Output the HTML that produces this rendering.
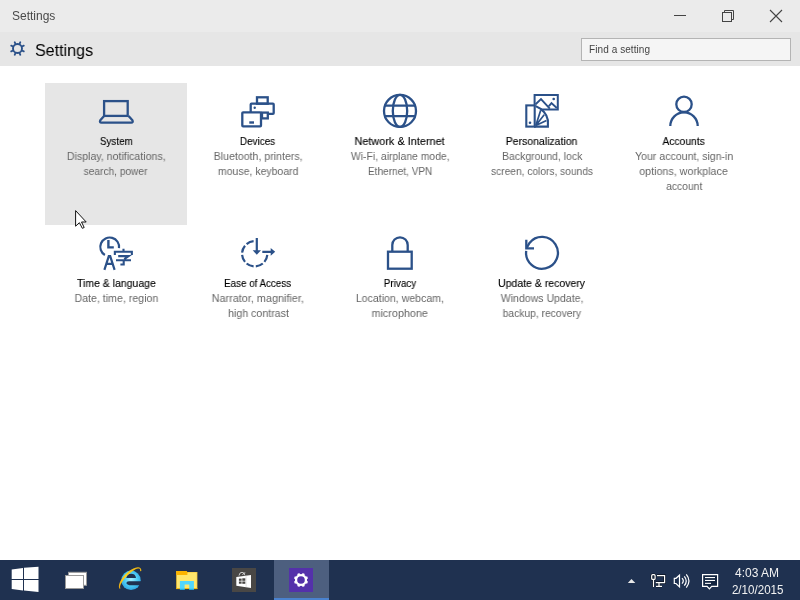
<!DOCTYPE html>
<html><head><meta charset="utf-8">
<style>
html,body{margin:0;padding:0;width:800px;height:600px;overflow:hidden;background:#fff;font-family:"Liberation Sans",sans-serif;}
.abs{position:absolute;}
#titlebar{left:0;top:0;width:800px;height:32px;background:#ebebeb;}
#ttl{left:12px;top:9px;font-size:12px;color:#4a4a4a;}
#hdr{left:0;top:32px;width:800px;height:34px;background:#e6e6e6;}
#htxt{left:35px;top:41px;font-size:17px;color:#000;transform:scaleX(0.945);transform-origin:0 0;}
#search{left:581px;top:38px;width:208px;height:21px;border:1px solid #b4b4b4;background:#f5f5f5;}
#stxt{left:589px;top:44px;font-size:10px;letter-spacing:0.08px;color:#444;}
.sel{left:45px;top:83px;width:142px;height:142px;background:#e6e6e6;}
.ln{position:absolute;width:142px;text-align:center;font-size:11px;line-height:15px;white-space:nowrap;}
.ln span{display:inline-block;transform-origin:50% 50%;will-change:transform;}
#ttl,#htxt,#stxt,.clk{will-change:transform;}
.t{color:#000;-webkit-text-stroke:0.12px #000;}
.d{color:#666;}
#taskbar{left:0;top:560px;width:800px;height:40px;background:#1f3150;}
</style></head><body>
<div id="titlebar" class="abs"></div>
<div id="ttl" class="abs">Settings</div>
<svg class="abs" style="left:660px;top:0" width="140" height="32">
 <line x1="14" y1="15.5" x2="26" y2="15.5" stroke="#444" stroke-width="1"/>
 <rect x="62.5" y="12.5" width="9" height="9" fill="none" stroke="#444" stroke-width="1"/>
 <path d="M64.5 12.5V10.5H73.5V19.5H71.5" fill="none" stroke="#444" stroke-width="1"/>
 <path d="M110 10L122 22M122 10L110 22" stroke="#444" stroke-width="1.1"/>
</svg>
<div id="hdr" class="abs"></div>
<svg class="abs" style="left:0;top:32px" width="40" height="34" viewBox="0 32 40 34">
 <circle cx="17.5" cy="48.5" r="4.5" fill="none" stroke="#2b5189" stroke-width="1.9"/>
 <path d="M21.89,50.45L23.80,51.31M19.45,52.89L20.31,54.80M15.55,52.89L14.69,54.80M13.11,50.45L11.20,51.31M13.11,46.55L11.20,45.69M15.55,44.11L14.69,42.20M19.45,44.11L20.31,42.20M21.89,46.55L23.80,45.69" stroke="#2b5189" stroke-width="1.8" stroke-linecap="round"/>
</svg>
<div id="htxt" class="abs">Settings</div>
<div id="search" class="abs"></div>
<div id="stxt" class="abs">Find a setting</div>

<div class="sel abs"></div>
<!--TILES-->
<div class="ln t" style="left:45px;top:134px"><span style="transform:scaleX(0.8972)">System</span></div>
<div class="ln d" style="left:45px;top:149px"><span style="transform:scaleX(0.9637)">Display, notifications,</span></div>
<div class="ln d" style="left:45px;top:164px"><span style="transform:scaleX(0.9232)">search, power</span></div>
<div class="ln t" style="left:187px;top:134px"><span style="transform:scaleX(0.9026)">Devices</span></div>
<div class="ln d" style="left:187px;top:149px"><span style="transform:scaleX(0.9630)">Bluetooth, printers,</span></div>
<div class="ln d" style="left:187px;top:164px"><span style="transform:scaleX(0.9548)">mouse, keyboard</span></div>
<div class="ln t" style="left:329px;top:134px"><span style="transform:scaleX(0.9890)">Network &amp; Internet</span></div>
<div class="ln d" style="left:329px;top:149px"><span style="transform:scaleX(0.9448)">Wi-Fi, airplane mode,</span></div>
<div class="ln d" style="left:329px;top:164px"><span style="transform:scaleX(0.9157)">Ethernet, VPN</span></div>
<div class="ln t" style="left:471px;top:134px"><span style="transform:scaleX(0.9527)">Personalization</span></div>
<div class="ln d" style="left:471px;top:149px"><span style="transform:scaleX(0.9512)">Background, lock</span></div>
<div class="ln d" style="left:471px;top:164px"><span style="transform:scaleX(0.9273)">screen, colors, sounds</span></div>
<div class="ln t" style="left:613px;top:134px"><span style="transform:scaleX(0.9348)">Accounts</span></div>
<div class="ln d" style="left:613px;top:149px"><span style="transform:scaleX(0.9598)">Your account, sign-in</span></div>
<div class="ln d" style="left:613px;top:164px"><span style="transform:scaleX(0.9725)">options, workplace</span></div>
<div class="ln d" style="left:613px;top:179px"><span style="transform:scaleX(0.9385)">account</span></div>
<div class="ln t" style="left:45px;top:276px"><span style="transform:scaleX(0.9518)">Time &amp; language</span></div>
<div class="ln d" style="left:45px;top:291px"><span style="transform:scaleX(0.9640)">Date, time, region</span></div>
<div class="ln t" style="left:187px;top:276px"><span style="transform:scaleX(0.8907)">Ease of Access</span></div>
<div class="ln d" style="left:187px;top:291px"><span style="transform:scaleX(0.9859)">Narrator, magnifier,</span></div>
<div class="ln d" style="left:187px;top:306px"><span style="transform:scaleX(0.9651)">high contrast</span></div>
<div class="ln t" style="left:329px;top:276px"><span style="transform:scaleX(0.9000)">Privacy</span></div>
<div class="ln d" style="left:329px;top:291px"><span style="transform:scaleX(0.9589)">Location, webcam,</span></div>
<div class="ln d" style="left:329px;top:306px"><span style="transform:scaleX(0.9807)">microphone</span></div>
<div class="ln t" style="left:471px;top:276px"><span style="transform:scaleX(0.9549)">Update &amp; recovery</span></div>
<div class="ln d" style="left:471px;top:291px"><span style="transform:scaleX(0.9593)">Windows Update,</span></div>
<div class="ln d" style="left:471px;top:306px"><span style="transform:scaleX(0.9357)">backup, recovery</span></div>
<!--/TILES-->
<svg class="abs" style="left:0;top:0" width="800" height="560" viewBox="0 0 800 560">
<g fill="none" stroke="#2b5189" stroke-width="2.3">
 <!-- system laptop -->
 <rect x="104.1" y="101.1" width="23.6" height="14.8"/>
 <path d="M104.1,116 L100.3,120.2 Q99.2,122.7 101.5,122.7 L131.2,122.7 Q133.5,122.7 132.4,120.2 L128.6,116" stroke-linejoin="round"/>
 <!-- devices -->
 <rect x="257" y="97.3" width="10.7" height="6.4"/>
 <rect x="250.7" y="103.7" width="23" height="10.2" rx="0.8"/>
 <rect x="262" y="112.6" width="5.8" height="5.8" fill="#fff"/>
 <rect x="242.3" y="112.3" width="18.7" height="14" rx="0.8" fill="#fff"/>
 <!-- globe -->
 <circle cx="400" cy="110.9" r="16"/>
 <ellipse cx="400" cy="110.9" rx="7.2" ry="16"/>
 <path d="M384.5,105.7H415.5M384.5,116.2H415.5"/>
 <!-- personalization -->
 <path d="M540.6,109.6 H557.8 V95.1 H534.6 V106" stroke-width="2"/>
 <path d="M535.6,104.2 L541,99 L549.8,108.6 M548.9,106.2 L551.5,103.1 L556.8,108" stroke-width="1.9"/>
 <rect x="526.3" y="105.4" width="8.4" height="21.2" stroke-width="2.1"/>
 <path d="M535.7,106.2 L540.7,108.9 L544,112 Q546.8,115 547.9,120.3 V126.6 H534" stroke-width="2.1"/>
 <path d="M535.8,125.5 L540.7,110.2 M535.8,125.5 L544.2,114.8 M535.8,125.5 L546.5,120.5" stroke-width="1.7"/>
 <!-- accounts -->
 <circle cx="684" cy="104.3" r="7.7"/>
 <path d="M670.3,126 A13.7,13.7 0 0 1 697.7,126"/>
 <!-- time & language -->
 <path d="M104.9,255 A9.4,9.4 0 1 1 119,248.2" stroke-width="2.2"/>
 <path d="M108.4,240 V247.4 H113.8" stroke-width="2.4"/>
 <path d="M104.4,269.8 L108.8,256.2 H110.2 L114.6,269.8 M106,263.9 H113" stroke-width="2.2"/>
 <path d="M123.5,248.8 V251 M114.85,255.1 V251.8 H131.85 V255.1 M118.2,256.1 H128.6 L124.3,259.1 M116,260.3 H131 M123.7,259.5 V264.5 H120.4" stroke-width="2.1"/>
 <!-- ease of access -->
 <path d="M267.3,254.9A12.6,12.6 0 0 1 264.4,261.9M262.8,263.5A12.6,12.6 0 0 1 255.8,266.4M253.6,266.4A12.6,12.6 0 0 1 246.6,263.5M245.0,261.9A12.6,12.6 0 0 1 242.1,254.9M242.1,252.7A12.6,12.6 0 0 1 245.0,245.7M246.6,244.1A12.6,12.6 0 0 1 253.6,241.2" stroke-width="2.2"/>
 <path d="M256.8,238 V251 M262.3,251.8 H271.5" stroke-width="2.2"/>
 <!-- privacy -->
 <rect x="388" y="251.7" width="23.7" height="17"/>
 <path d="M392.3,251.7 V245 A7.7,7.7 0 0 1 407.7,245 V251.7"/>
 <!-- update -->
 <path d="M526.2,250.9 A15.9,15.9 0 1 0 529.5,243 L526.8,247.6" stroke-width="2.3"/>
 <path d="M526.3,239.8 V248.4 H534" stroke-width="2.3"/>
</g>
<g fill="#2b5189">
 <circle cx="254.7" cy="107.7" r="1.2"/>
 <rect x="249.3" y="121.3" width="4.7" height="2.4"/>
 <circle cx="553.7" cy="99" r="1.3"/>
 <circle cx="530" cy="122.7" r="1.3"/>
 <path d="M252.7,250.3 H261 L256.8,254.8Z M270.7,247.9 L275.2,251.8 L270.7,255.7Z"/>
</g>
</svg>
<svg class="abs" style="left:0;top:0" width="800" height="600" viewBox="0 0 800 600">
 <path d="M75.6,210.6 L75.6,226.2 L79.4,222.7 L82.3,228.3 L84.2,227.5 L81.5,222 L86.2,222 Z" fill="#fff" stroke="#111" stroke-width="1" stroke-linejoin="miter"/>
</svg>
<div id="taskbar" class="abs"></div>
<svg class="abs" style="left:0;top:560px" width="800" height="40" viewBox="0 560 800 40">
 <defs>
  <radialGradient id="ieg" cx="0.5" cy="0.45" r="0.6">
   <stop offset="0" stop-color="#a8f0ff"/><stop offset="0.55" stop-color="#4ccbf5"/><stop offset="1" stop-color="#2a9ee0"/>
  </radialGradient>
  <linearGradient id="ring" x1="0" y1="1" x2="1" y2="0">
   <stop offset="0" stop-color="#e8a810"/><stop offset="0.45" stop-color="#ffd21e"/><stop offset="1" stop-color="#e9b010"/>
  </linearGradient>
 </defs>
 <!-- start -->
 <g fill="#fff">
  <path d="M11.7,569.4 L23,567.9 V579 H11.7Z"/>
  <path d="M24,567.8 L38.5,566.7 V579 H24Z"/>
  <path d="M11.7,580 H23 V590.5 L11.7,589Z"/>
  <path d="M24,580 H38.5 V592 L24,590.6Z"/>
 </g>
 <!-- task view -->
 <rect x="68.5" y="572.3" width="18" height="13" fill="#fff" stroke="#9a9a9a" stroke-width="1"/>
 <rect x="65.5" y="575.5" width="18" height="13" fill="#fff" stroke="#9a9a9a" stroke-width="1"/>
 <!-- IE -->
  <circle cx="131" cy="580.3" r="9.7" fill="url(#ieg)"/>
 <path d="M126.3,578 Q126.8,573.8 131.2,573.7 Q135.6,573.8 136,578 Z" fill="#1f3150"/>
 <path d="M142,581.3 H129 Q126.3,581.3 126.6,583.2 Q127.4,585.2 131,585.2 H142 Z" fill="#1f3150"/>
 <path d="M119.9,589.0 L119.6,588.7 L119.4,588.3 L119.2,587.9 L119.0,587.5 L118.9,587.0 L118.9,586.4 L118.9,585.9 L119.0,585.2 L119.1,584.6 L119.3,583.9 L119.5,583.2 L119.8,582.5 L120.1,581.8 L120.5,581.0 L120.9,580.3 L121.4,579.5 L121.9,578.7 L122.4,577.9 L123.0,577.1 L123.7,576.4 L124.3,575.6 L125.0,574.8 L125.7,574.1 L126.4,573.4 L127.2,572.7 L128.0,572.1 L128.7,571.4 L129.5,570.8 L130.3,570.3 L131.1,569.8 L131.9,569.3 L132.6,568.9 L133.4,568.5 L134.1,568.2 L134.8,567.9 L135.5,567.7 L136.2,567.5 L136.8,567.4 L137.5,567.3 L138.0,567.3 L138.6,567.3 L139.1,567.4 L139.5,567.6 L139.9,567.8 L140.3,568.0 L140.6,568.3 L140.8,568.7 L141.0,569.1 L141.2,569.5 L141.3,570.0 L141.3,570.6 L141.3,571.1 L139.9,571.3 L140.0,570.9 L140.1,570.4 L140.1,570.0 L140.1,569.7 L140.0,569.4 L139.9,569.1 L139.7,568.9 L139.5,568.7 L139.2,568.6 L138.9,568.5 L138.6,568.5 L138.2,568.5 L137.7,568.6 L137.3,568.7 L136.8,568.8 L136.2,569.1 L135.6,569.3 L135.1,569.6 L134.4,570.0 L133.8,570.4 L133.1,570.8 L132.5,571.2 L131.8,571.7 L131.1,572.3 L130.4,572.8 L129.7,573.4 L129.0,574.0 L128.3,574.7 L127.6,575.3 L126.9,576.0 L126.3,576.7 L125.6,577.4 L125.0,578.1 L124.4,578.8 L123.9,579.5 L123.3,580.2 L122.8,580.9 L122.4,581.5 L122.0,582.2 L121.6,582.8 L121.2,583.5 L120.9,584.0 L120.7,584.6 L120.4,585.2 L120.3,585.7 L120.2,586.1 L120.1,586.6 L120.1,587.0 L120.1,587.3 L120.2,587.6 L120.3,587.9 L120.5,588.1Z" fill="url(#ring)"/>
 <!-- folder -->
 <path d="M176.2,570.9 H186.4 L187.4,571.9 H197.4 V589.1 H176.2Z" fill="#f3c237"/>
 <rect x="176.9" y="572.5" width="19.8" height="15.9" fill="#ffe76c"/>
 <path d="M176.2,570.9 H186.4 L187.4,572.2 V574.9 H176.2Z" fill="#fbb400"/>
 <rect x="176.2" y="588.2" width="21.2" height="0.9" fill="#f5b500"/>
 <path d="M179.9,580.9 H193.9 V589.8 H189.3 V584.4 H184.6 V589.8 H179.9Z" fill="#52d6fc"/>
 <rect x="179.9" y="588.8" width="4.7" height="1" fill="#1aa8e0"/><rect x="189.3" y="588.8" width="4.6" height="1" fill="#1aa8e0"/>
 <!-- store -->
 <rect x="232" y="568" width="24" height="24" fill="#494745"/>
 <path d="M239,575.6 Q239.5,572.2 242,572.3 Q244.4,572.3 244.7,575.2 M242.5,575 Q243.5,572.6 245.3,572.8" fill="none" stroke="#d8d8d8" stroke-width="0.9"/>
 <path d="M236.3,577 L251,574.9 V587.9 L236.3,585.8Z" fill="#fff"/>
 <path d="M246.1,575.6 V587.2" stroke="#cfcfcf" stroke-width="0.6"/>
 <g fill="#474542"><rect x="238.9" y="578.6" width="2.7" height="2.2"/><rect x="242.3" y="578.3" width="3" height="2.5"/><rect x="238.9" y="581.5" width="2.7" height="2.2"/><rect x="242.3" y="581.5" width="3" height="2.3"/></g>
 <!-- active settings -->
 <rect x="274" y="560" width="55" height="40" fill="#4d5f7f"/>
 <rect x="274" y="598" width="55" height="2" fill="#4a82cf"/>
 <rect x="289" y="568" width="24" height="24" fill="#5431aa"/>
 <circle cx="301" cy="580" r="4.95" fill="none" stroke="#fff" stroke-width="2.3"/>
 <path d="M305.62,581.91L307.56,582.72M302.91,584.62L303.72,586.56M299.09,584.62L298.28,586.56M296.38,581.91L294.44,582.72M296.38,578.09L294.44,577.28M299.09,575.38L298.28,573.44M302.91,575.38L303.72,573.44M305.62,578.09L307.56,577.28" stroke="#fff" stroke-width="2.4"/>
 <!-- tray -->
 <path d="M627.8,583 L631.5,579 L635.3,583Z" fill="#e8e8e8"/>
 <g fill="none" stroke="#000" stroke-width="2.6" opacity="0.55">
  <rect x="651.7" y="574.7" width="3.4" height="4.7" rx="1"/>
  <path d="M653.5,580 V587 M657,575.6 H664.6 V582.6 H655.8 M659,583 V586.3 M656,586.3 H662"/>
 </g>
 <g fill="none" stroke="#fff" stroke-width="1.2">
  <rect x="651.7" y="574.7" width="3.4" height="4.7" rx="1"/>
  <path d="M653.5,580 V587 M657,575.6 H664.6 V582.6 H655.8 M659,583 V586.3 M656,586.3 H662"/>
  <path d="M674.3,578.3 H676 L679.5,575.2 V586.9 L676,583.5 H674.3Z"/>
  <path d="M682,578.2 Q684.6,580.9 682,583.6 M684.3,576.3 Q688.2,580.9 684.3,585.6 M686.3,574.4 Q691.6,580.9 686.3,587.6"/>
  <path d="M702.6,574.6 H717.6 V586.3 H711.7 L709.4,588.8 L707.1,586.3 H702.6Z" fill="#132540"/>
 </g>
 <g fill="#fff"><rect x="705" y="577" width="10" height="1.1"/><rect x="705" y="579.9" width="10" height="1.1"/><rect x="705" y="582.8" width="6" height="1.1"/></g>
</svg>
<div class="abs clk" style="left:721px;top:565px;width:72px;text-align:center;font-size:12px;line-height:16px;color:#f2f2f2;">4:03 AM</div>
<div class="abs clk" style="left:722px;top:582px;width:72px;text-align:center;font-size:12px;line-height:16px;color:#f2f2f2;"><span style="display:inline-block;transform:scaleX(0.965)">2/10/2015</span></div>


</body></html>
